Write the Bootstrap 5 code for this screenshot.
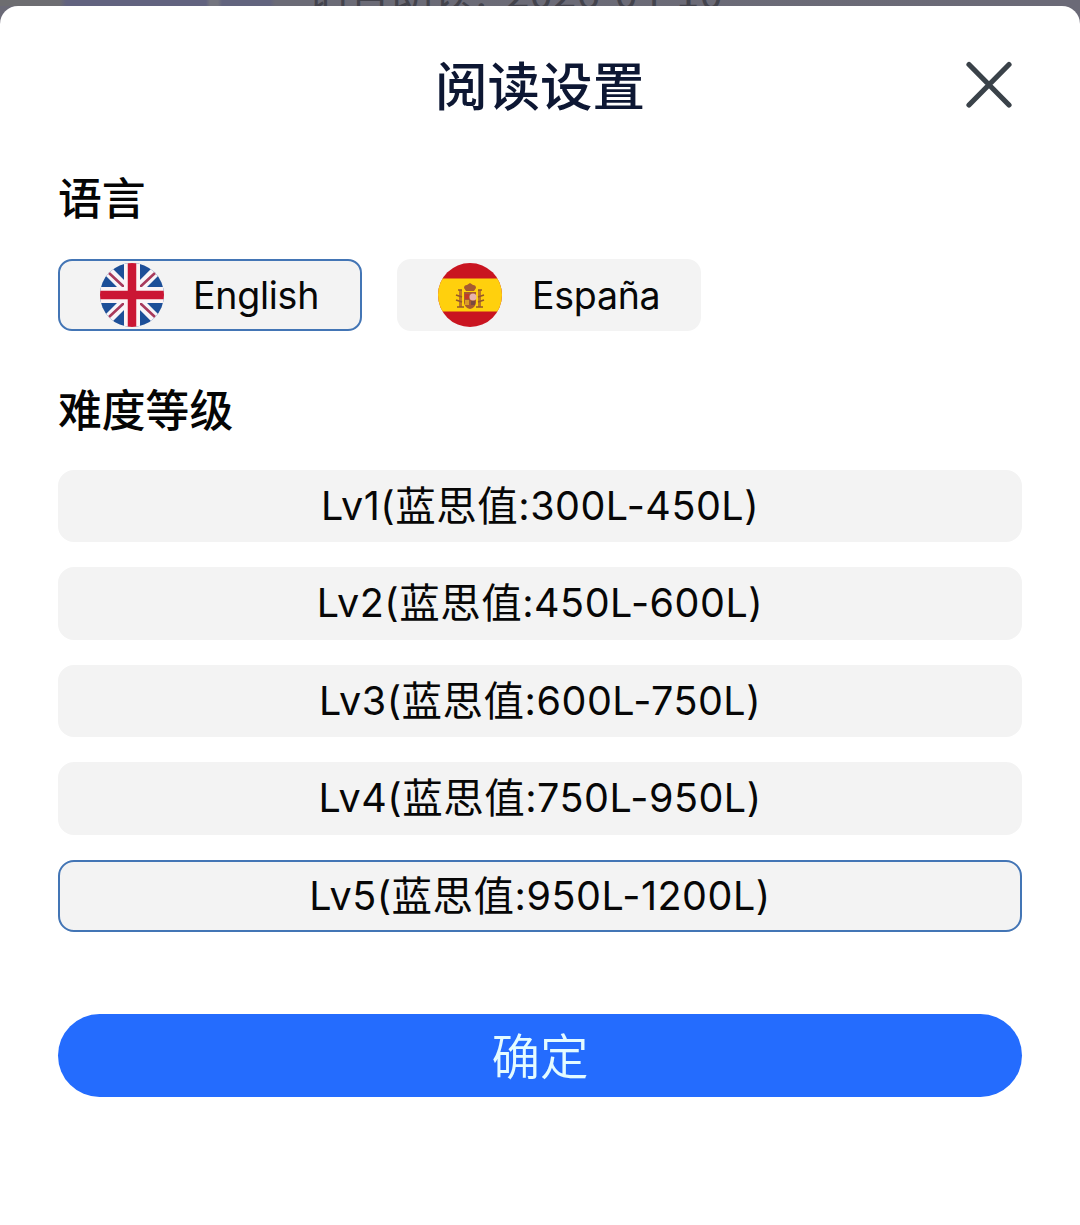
<!DOCTYPE html>
<html lang="zh-CN">
<head>
<meta charset="utf-8">
<meta name="viewport" content="width=device-width, initial-scale=1">
<title>阅读设置</title>
<link href="https://cdn.jsdelivr.net/npm/bootstrap@5.3.0/dist/css/bootstrap.min.css" rel="stylesheet">
<style>
body{font-family:Inter,"Noto Sans CJK SC",sans-serif;background:#6b6a77;color:#070707;height:1225px;overflow:hidden}
.backdrop-strip{height:6px;background:linear-gradient(90deg,#6d6d70 0,#6d6d72 60px,#62637f 66px,#62637f 206px,#74757f 210px,#74757f 218px,#62647e 222px,#62647e 270px,#6b6b76 275px,#6b6a77 100%)}
.backdrop-text{font-family:"Noto Sans CJK SC",sans-serif;font-size:42px;line-height:48px;color:#43434c;padding-left:307px;margin-top:-34px;white-space:pre;letter-spacing:.1px}
.sheet{height:1219px;border-radius:18px 18px 0 0;padding:0 58px}
.sheet-head{height:160px;padding-right:9px;padding-bottom:2px}
.sheet-title{font-size:52.5px;line-height:60px;font-weight:500;color:#0d1733;font-family:"Noto Sans CJK SC",sans-serif;padding-bottom:5px}
.close-btn{width:48px;height:48px}
.section-title{font-family:"Noto Sans CJK SC",sans-serif;font-size:43.8px;line-height:60px;font-weight:500;color:#050505}
.level-title{margin-top:47px}
.option{background:#f3f3f3;border:2px solid #f3f3f3;border-radius:14px;color:#070707}
.level.option{border-radius:16px}
.option.selected{border-color:#4375b5}
.lang{width:304px;height:72px;font-size:37.5px;letter-spacing:-.25px;line-height:68px;padding:0 0 0 40px}
.lang svg{width:64px;height:64px;margin-right:29px}
.lang span{padding-top:1px}
.lang + .lang{padding-left:39px}
.lang + .lang svg{margin-right:30px}
.lang-row{gap:35px;margin-top:33px}
.level-list{gap:25px;margin-top:31.5px}
.level{height:72.5px;font-size:39.5px;line-height:69px;letter-spacing:.5px}
.level span{font-size:40.5px;line-height:1;position:relative;top:1px}
.confirm{height:83px;margin-top:81.5px;background:#246cfe;border:0;color:#e4fbff;font-size:48.5px;line-height:80px;font-family:"Noto Sans CJK SC",sans-serif;font-weight:350}
.confirm span{display:block;height:83px}
</style>
</head>
<body>
<div class="backdrop-strip overflow-hidden"><div class="backdrop-text">语言朗读:  2026-04-10</div></div>
<main class="sheet bg-white d-flex flex-column">
  <header class="sheet-head d-flex align-items-center position-relative">
    <h1 class="sheet-title m-0 position-absolute start-0 end-0 text-center">阅读设置</h1>
    <button class="close-btn btn p-0 border-0 ms-auto position-relative d-flex" aria-label="关闭"><svg width="48" height="48" viewBox="0 0 48 48"><path d="M4 3.500L44 44M44 3.500L4 44" stroke="#3a4249" stroke-width="5.200" stroke-linecap="round"/></svg></button>
  </header>
  <h2 class="section-title m-0">语言</h2>
  <div class="lang-row d-flex">
    <button class="option selected lang d-flex align-items-center">
      <svg viewBox="0 0 64 64"><defs><clipPath id="c"><circle cx="32" cy="32" r="32"/></clipPath></defs><g clip-path="url(#c)"><path fill="#1d4f98" d="M0 0h64v64H0z"/><path d="M0 0L64 64M64 0L0 64" stroke="#f8f5f8" stroke-width="10"/><path d="M9 10L24 24M55 10L40 24M9 54L24 40M55 54L40 40" stroke="#a83a5c" stroke-width="2.6"/><path d="M32 0v64M0 32h64" stroke="#fbf4f5" stroke-width="16"/><path d="M32 0v64M0 32h64" stroke="#cb1634" stroke-width="8.5"/></g></svg>
      <span>English</span>
    </button>
    <button class="option lang d-flex align-items-center">
      <svg viewBox="0 0 64 64"><g clip-path="url(#c)"><path fill="#c91420" d="M0 0h64v64H0z"/><path fill="#ffd00d" d="M0 15.500h64v33H0z"/></g>
      <g fill="#a65a30"><path d="M26 25q0-3 3-3l3-2 3 2q3 0 3 3l-2 3h-8z"/><path d="M26 29h12v11q-1 5-6 6-5-1-6-6z"/><path d="M21 27h3v17h-3zM40 27h3v17h-3z" opacity=".75"/></g>
      <path d="M18 32l6 2M18 37l6 2M46 32l-6 2M46 37l-6 2M19 44h7M38 44h7M20 27h4M40 27h4" stroke="#95582b" stroke-width="1.6"/><path d="M27 31h4v5h-4z" fill="#c23a28"/><path d="M27 37h4v5h-4z" fill="#d99c27"/><path d="M33 31h4v5h-4z" fill="#eec7b5"/><circle cx="35" cy="34" r="3.500" fill="#e8b3ad"/><path d="M33 38h4v4h-4z" fill="#7a4a40"/></svg>
      <span>España</span>
    </button>
  </div>
  <h2 class="section-title level-title mb-0">难度等级</h2>
  <div class="level-list d-flex flex-column">
    <button class="option level w-100 p-0">Lv1(<span>蓝思值</span>:300L-450L)</button>
    <button class="option level w-100 p-0">Lv2(<span>蓝思值</span>:450L-600L)</button>
    <button class="option level w-100 p-0">Lv3(<span>蓝思值</span>:600L-750L)</button>
    <button class="option level w-100 p-0">Lv4(<span>蓝思值</span>:750L-950L)</button>
    <button class="option selected level w-100 p-0">Lv5(<span>蓝思值</span>:950L-1200L)</button>
  </div>
  <button class="confirm btn rounded-pill w-100 p-0"><span>确定</span></button>
</main>
<script src="https://cdn.jsdelivr.net/npm/bootstrap@5.3.0/dist/js/bootstrap.bundle.min.js"></script>
</body>
</html>
